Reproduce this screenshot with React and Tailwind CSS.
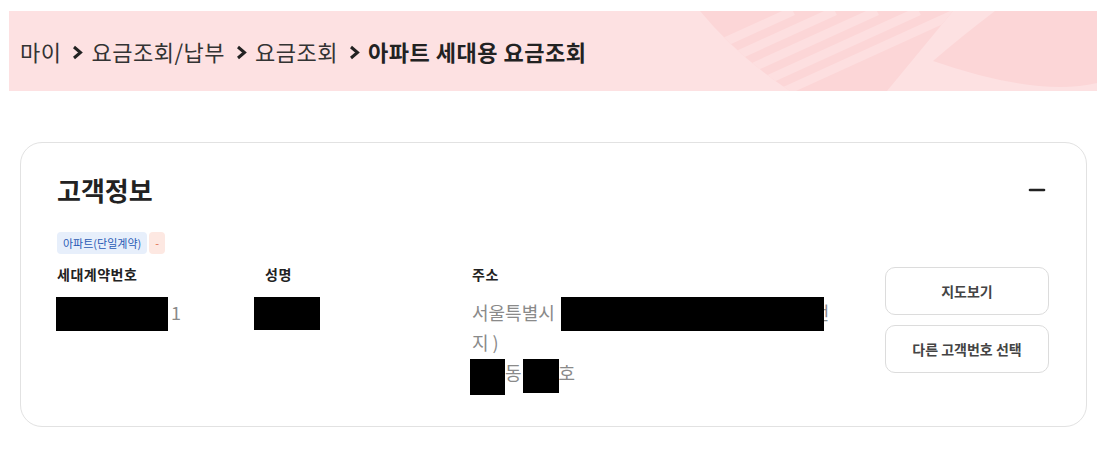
import React from "react";
import { Minus } from "lucide-react";

const Chevron = () => (
  <svg width="11" height="15" viewBox="0 0 11 15" className="ml-[11px] mr-[8px] mt-[2px]">
    <path d="M2 2 L8.5 7.5 L2 13" fill="none" stroke="#222" strokeWidth="3" strokeLinejoin="miter" />
  </svg>
);

// decorative stripes on the right side of the banner
const BannerArt = () => (
  <svg className="absolute right-0 top-0" width="500" height="80" viewBox="0 0 500 80">
    <defs>
      <clipPath id="band">
        <path d="M103 0 L356 0 L290 80 L193 80 Q140 45 103 0 Z" />
      </clipPath>
    </defs>
    <path d="M103 0 L356 0 L290 80 L193 80 Q140 45 103 0 Z" fill="#fcd6d7" />
    <g clipPath="url(#band)" stroke="#fddfe0" strokeWidth="9">
      <line x1="20" y1="80" x2="196" y2="0" />
      <line x1="62" y1="80" x2="238" y2="0" />
      <line x1="104" y1="80" x2="280" y2="0" />
      <line x1="146" y1="80" x2="322" y2="0" />
      <line x1="188" y1="80" x2="364" y2="0" />
    </g>
    <path d="M398 0 L500 0 L500 72 Q440 86 336 50 Q365 25 398 0 Z" fill="#fcd6d7" />
  </svg>
);

const Tag = ({ children, className }) => (
  <span className={`inline-flex items-center h-[22px] px-[6px] rounded-[4px] text-[11px] ${className}`}>
    {children}
  </span>
);

const Block = ({ w, h, className = "" }) => (
  <span className={`relative z-10 inline-block bg-black ${className}`} style={{ width: w, height: h }} />
);

export default function App() {
  return (
    <div className="w-[1110px] h-[455px] bg-white pt-[11px]" style={{ fontFamily: '"Noto Sans CJK KR", "Noto Sans", sans-serif' }}>
      {/* Breadcrumb banner */}
      <div className="relative ml-[9px] w-[1088px] h-[80px] bg-[#fde1e2] overflow-hidden flex items-center pl-[11px]">
        <BannerArt />
        <div className="relative flex items-center text-[22px] text-[#333] tracking-[0.5px]">
          <span>마이</span>
          <Chevron />
          <span>요금조회/납부</span>
          <Chevron />
          <span>요금조회</span>
          <Chevron />
          <span className="font-bold text-[#222]">아파트 세대용 요금조회</span>
        </div>
      </div>

      {/* Customer info card */}
      <div className="ml-[20px] mt-[51px] w-[1067px] h-[285px] border border-[#e2e2e2] rounded-[22px] px-[36px] pt-[29px] flex flex-col">
        <div className="flex items-center justify-between">
          <h2 className="text-[26px] font-bold text-[#222] leading-[36px]">고객정보</h2>
          <Minus size={24} strokeWidth={2.6} color="#222" className="mr-[1px]" />
        </div>

        <div className="flex gap-[2px] mt-[24px]">
          <Tag className="bg-[#e7effb] text-[#2a5bb5]">아파트(단일계약)</Tag>
          <Tag className="bg-[#fde8e2] text-[#e07050]">-</Tag>
        </div>

        <div className="flex mt-[9px]">
          <div className="w-[208px]">
            <div className="text-[14px] font-bold text-[#222] leading-[22px] tracking-[0.5px]">세대계약번호</div>
            <div className="mt-[12px] flex items-center h-[30px] text-[18px] text-[#8a8a8a]">
              <Block w={112} h={34} className="-ml-[1px] mt-[4px]" />
              <span className="ml-[3px]">1</span>
            </div>
          </div>
          <div className="w-[207px]">
            <div className="text-[14px] font-bold text-[#222] leading-[22px] tracking-[0.5px]">성명</div>
            <div className="mt-[12px] flex items-center h-[30px]">
              <Block w={66} h={33} className="-ml-[11px] mt-[3px]" />
            </div>
          </div>
          <div className="w-[375px]">
            <div className="text-[14px] font-bold text-[#222] leading-[22px] tracking-[0.5px]">주소</div>
            <div className="mt-[12px] text-[18px] text-[#8a8a8a] leading-[30px]">
              <div className="flex items-center h-[30px]">
                <span>서울특별시</span>
                <Block w={263} h={34} className="ml-[6px] mt-[4px]" />
                <span className="-ml-[11px]">번</span>
              </div>
              <div className="h-[30px]">지 )</div>
              <div className="flex items-center h-[30px]">
                <Block w={35} h={36} className="-ml-[2px] mt-[10px]" />
                <span>동</span>
                <Block w={36} h={34} className="ml-[1px] mt-[8px]" />
                <span>호</span>
              </div>
            </div>
          </div>
          <div className="ml-auto mt-[4px] mr-[1px] flex flex-col gap-[10px]">
            <button className="w-[164px] h-[48px] border border-[#dcdcdc] rounded-[10px] text-[14px] font-bold text-[#444]">
              지도보기
            </button>
            <button className="w-[164px] h-[48px] border border-[#dcdcdc] rounded-[10px] text-[14px] font-bold text-[#444]">
              다른 고객번호 선택
            </button>
          </div>
        </div>
      </div>
    </div>
  );
}
